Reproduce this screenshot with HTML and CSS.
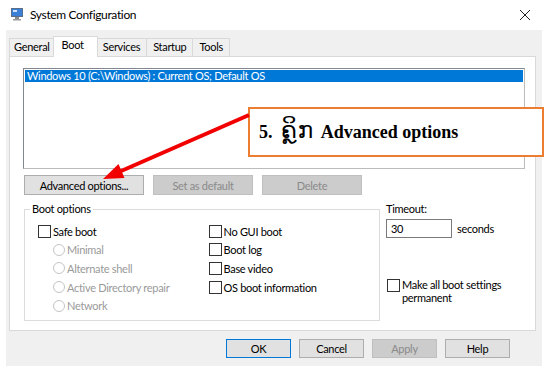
FILE: index.html
```html
<!DOCTYPE html>
<html>
<head>
<meta charset="utf-8">
<link rel="stylesheet" href="styles.css">
</head>
<body>
<div class="window">
  <div class="titlebar">
    <svg class="appicon" width="14" height="14" viewBox="0 0 14 14">
      <rect x="1" y="1" width="12" height="9" fill="#5a6e8c"/>
      <rect x="2" y="2" width="10" height="7" fill="#3b7fd6"/>
      <rect x="3" y="3" width="4" height="2" fill="#cfe3ff"/>
      <rect x="5" y="10" width="4" height="2" fill="#8a8a8a"/>
      <rect x="3" y="12" width="8" height="1.5" fill="#9a9a9a"/>
    </svg>
    <span class="title">System Configuration</span>
    <svg class="close" width="12" height="12" viewBox="0 0 12 12">
      <path d="M1 1 L11 11 M11 1 L1 11" stroke="#222" stroke-width="1"/>
    </svg>
  </div>
  <div class="dialog">
    <div class="tabs">
      <div class="tab first">General</div>
      <div class="tab active">Boot</div>
      <div class="tab">Services</div>
      <div class="tab">Startup</div>
      <div class="tab">Tools</div>
    </div>
    <div class="panel">
      <div class="listbox">
        <div class="item selected">Windows 10 (C:\Windows) : Current OS; Default OS</div>
      </div>
      <div class="btnrow">
        <div class="btn adv">Advanced options...</div>
        <div class="btn wide disabled">Set as default</div>
        <div class="btn wide disabled">Delete</div>
      </div>
      <div class="options">
        <div class="group">
          <div class="legend">Boot options</div>
          <div class="cols">
            <div class="col">
              <div class="row"><span class="check"></span>Safe boot</div>
              <div class="row sub disabled"><span class="radio"></span>Minimal</div>
              <div class="row sub disabled"><span class="radio"></span>Alternate shell</div>
              <div class="row sub disabled"><span class="radio"></span>Active Directory repair</div>
              <div class="row sub disabled"><span class="radio"></span>Network</div>
            </div>
            <div class="col right">
              <div class="row"><span class="check"></span>No GUI boot</div>
              <div class="row"><span class="check"></span>Boot log</div>
              <div class="row"><span class="check"></span>Base video</div>
              <div class="row"><span class="check"></span>OS boot information</div>
            </div>
          </div>
        </div>
        <div class="side">
          <div class="label">Timeout:</div>
          <div class="timeout">
            <div class="input">30</div>
            <span>seconds</span>
          </div>
          <div class="perm">
            <span class="check"></span>
            <span class="permtext">Make all boot settings<br>permanent</span>
          </div>
        </div>
      </div>
    </div>
    <div class="footer">
      <div class="btn small default">OK</div>
      <div class="btn small">Cancel</div>
      <div class="btn small disabled">Apply</div>
      <div class="btn small">Help</div>
    </div>
  </div>
  <div class="callout">5. <span class="lao">ຄຼິກ</span> Advanced options</div>
  <svg class="arrow" width="550" height="373" viewBox="0 0 550 373">
    <line x1="249" y1="115" x2="120" y2="171.5" stroke="#f20000" stroke-width="4"/>
    <polygon points="103,179 118.5,164 124.5,178" fill="#f20000"/>
  </svg>
</div>
</body>
</html>
```

FILE: styles.css
```css
* { box-sizing: border-box; }
html, body { margin: 0; padding: 0; background: #fff; }
body {
  font-family: "Lato", "Noto Sans", "DejaVu Sans", sans-serif;
  font-size: 11px;
  letter-spacing: -0.3px;
  color: #000;
  width: 550px;
  height: 373px;
  overflow: hidden;
}
.window {
  position: relative;
  width: 550px;
  height: 373px;
  padding: 0 8px 7px 6px;
}
.titlebar {
  height: 30px;
  display: flex;
  align-items: center;
  padding-left: 4px;
}
.appicon { margin-right: 6px; margin-top: -2px; }
.title { font-size: 12px; letter-spacing: -0.35px; margin-top: -1px; }
.close { margin-left: auto; margin-right: 11px; }

.dialog {
  background: #f0f0f0;
  height: 336px;
  padding: 6px 6px 0 3px;
  display: flex;
  flex-direction: column;
}
.tabs {
  display: flex;
  align-items: flex-end;
  height: 20px;
  padding-left: 1px;
  position: relative;
  z-index: 1;
}
.tab {
  height: 18px;
  border: 1px solid #d9d9d9;
  border-bottom: none;
  margin-left: -1px;
  padding: 0 6px;
  line-height: 16px;
  background: #f0f0f0;
}
.tab.first { padding: 0 4px; }
.tab.active {
  height: 21px;
  background: #fff;
  padding: 0 13px 0 8px;
  margin: 0 -1px 0 -2px;
  line-height: 15px;
  position: relative;
  top: 1px;
}
.panel {
  background: #fff;
  border: 1px solid #d9d9d9;
  height: 275px;
  padding: 11px 10px 0 13px;
  display: flex;
  flex-direction: column;
}
.listbox {
  height: 101px;
  border: 1px solid #828790;
  border-right-color: #bcbcbc;
  border-bottom-color: #bcbcbc;
  padding: 1px;
}
.item.selected {
  background: #0078d7;
  color: #fff;
  height: 12px;
  line-height: 12px;
  padding-left: 2px;
  white-space: nowrap;
}
.btnrow {
  display: flex;
  gap: 9px;
  margin-top: 6px;
  padding-left: 1px;
}
.btn {
  height: 20px;
  border: 1px solid #adadad;
  background: #e1e1e1;
  display: flex;
  align-items: center;
  justify-content: center;
}
.btn.adv { width: 120px; }
.btn.wide { width: 100px; }
.btn.disabled {
  background: #cccccc;
  border-color: #bfbfbf;
  color: #8a8a8a;
}
.options {
  display: flex;
  margin-top: 9px;
  padding-left: 1px;
}
.group {
  position: relative;
  width: 356px;
  height: 112px;
  border: 1px solid #dcdcdc;
  margin-top: 5px;
  padding: 12px 0 0 13px;
}
.legend {
  position: absolute;
  left: 5px;
  top: -8px;
  background: #fff;
  padding: 0 2px;
  line-height: 14px;
}
.cols { display: flex; }
.col { width: 182px; }
.row {
  height: 18.6px;
  display: flex;
  align-items: center;
}
.row.sub { padding-left: 15px; }
.disabled { color: #9a9a9a; }
.check {
  width: 13px;
  height: 13px;
  border: 1px solid #333;
  background: #fff;
  margin-right: 2px;
  flex: none;
}
.radio {
  width: 12px;
  height: 12px;
  border: 1px solid #c4c4c4;
  border-radius: 50%;
  margin-right: 2px;
  flex: none;
}
.side {
  padding-left: 6px;
  display: flex;
  flex-direction: column;
}
.label { line-height: 14px; margin-top: -2px; }
.timeout {
  display: flex;
  align-items: center;
  gap: 5px;
  margin-top: 3px;
}
.input {
  width: 66px;
  height: 19px;
  border: 1px solid #7a7a7a;
  background: #fff;
  padding-left: 4px;
  line-height: 17px;
}
.perm {
  display: flex;
  align-items: flex-start;
  margin-top: 40px;
  padding-left: 1px;
}
.permtext { line-height: 13px; }
.perm .check { margin-top: 1px; }
.footer {
  display: flex;
  justify-content: flex-end;
  gap: 8px;
  margin-top: 8px;
  padding-right: 26px;
}
.btn.small { width: 65px; height: 19px; }
.btn.default { border-color: #0078d7; }

.callout {
  position: absolute;
  left: 248px;
  top: 107px;
  width: 296px;
  height: 50px;
  border: 2px solid #ed7d31;
  background: #fff;
  font-family: "Liberation Serif", "DejaVu Serif", serif;
  font-weight: bold;
  font-size: 18px;
  letter-spacing: 0;
  padding-left: 9px;
  line-height: 46px;
  white-space: nowrap;
}
.lao {
  font-family: "DejaVu Sans", "Noto Sans", sans-serif;
  font-weight: normal;
  font-size: 23px;
  line-height: 20px;
  letter-spacing: 1px;
  margin: 0 2px 0 4px;
}
.arrow { position: absolute; left: 0; top: 0; pointer-events: none; }
```
